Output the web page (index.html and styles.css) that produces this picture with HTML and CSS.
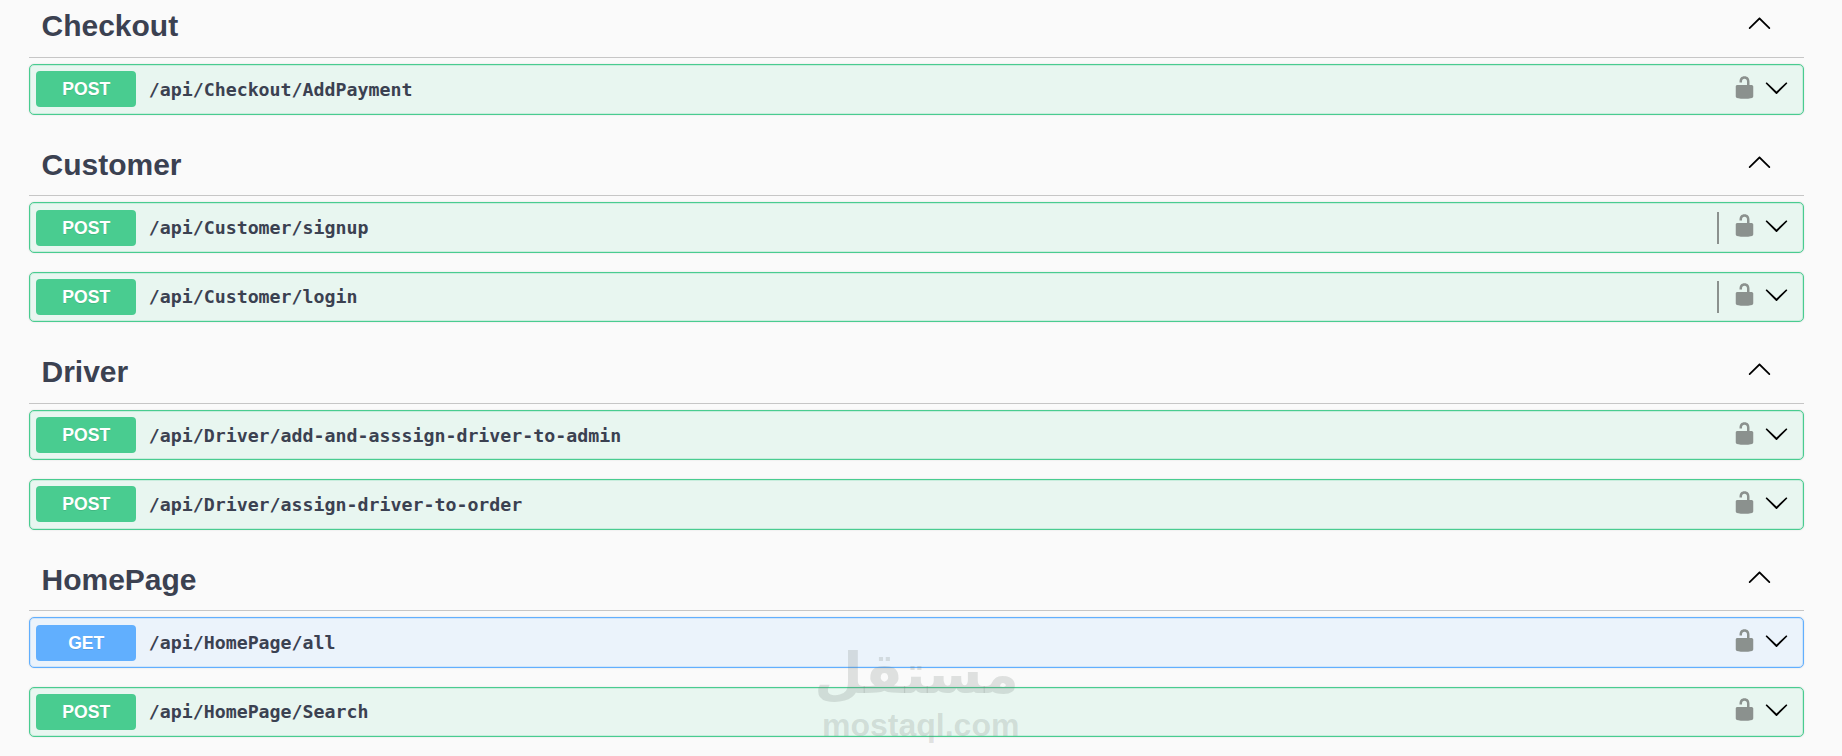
FILE: index.html
```html
<!DOCTYPE html>
<html lang="en">

<head>
    <meta charset="UTF-8">
    <meta name="viewport" content="width=device-width, initial-scale=1.0">
    <title>Swagger UI</title>
    <link rel="stylesheet" href="styles.css">
</head>

<body>
    <svg class="defs" aria-hidden="true">
        <symbol id="unlocked" viewBox="0 0 20 20">
            <path d="M15.8 8H14V5.6C14 2.703 12.665 1 10 1 7.334 1 6 2.703 6 5.6V6h2v-.801C8 3.754 8.797 3 10 3c1.203 0 2 .754 2 2.199V8H4c-.553 0-1 .646-1 1.199V17c0 .549.428 1.139.951 1.307l1.197.387C5.672 18.861 6.55 19 7.1 19h5.8c.549 0 1.428-.139 1.951-.307l1.196-.387c.524-.167.953-.757.953-1.306V9.199C17 8.646 16.352 8 15.8 8z"></path>
        </symbol>
        <symbol id="arrow-up" viewBox="0 0 20 20">
            <path d="M17.418 14.908c.272.268.709.268.979 0s.271-.701 0-.969l-7.908-7.83c-.27-.268-.707-.268-.979 0l-7.908 7.83c-.27.268-.27.701 0 .969.271.268.709.268.979 0L10 7.767l7.418 7.141z"></path>
        </symbol>
        <symbol id="arrow-down" viewBox="0 0 20 20">
            <path d="M17.418 6.109c.272-.268.709-.268.979 0s.271.701 0 .969l-7.908 7.83c-.27.268-.707.268-.979 0l-7.908-7.83c-.27-.268-.27-.701 0-.969.271-.268.709-.268.979 0L10 13.25l7.418-7.141z"></path>
        </symbol>
    </svg>

    <div class="tags">
        <section class="tag">
            <h3 class="tag-title"><span>Checkout</span><svg class="icon"><use href="#arrow-up"></use></svg></h3>
            <div class="op post">
                <span class="method">POST</span>
                <span class="path">/api/Checkout/AddPayment</span>
                <div class="op-right">
                    <svg class="icon lock"><use href="#unlocked"></use></svg>
                    <svg class="icon"><use href="#arrow-down"></use></svg>
                </div>
            </div>
        </section>

        <section class="tag">
            <h3 class="tag-title"><span>Customer</span><svg class="icon"><use href="#arrow-up"></use></svg></h3>
            <div class="op post">
                <span class="method">POST</span>
                <span class="path">/api/Customer/signup</span>
                <div class="op-right">
                    <i class="divider"></i>
                    <svg class="icon lock"><use href="#unlocked"></use></svg>
                    <svg class="icon"><use href="#arrow-down"></use></svg>
                </div>
            </div>
            <div class="op post">
                <span class="method">POST</span>
                <span class="path">/api/Customer/login</span>
                <div class="op-right">
                    <i class="divider"></i>
                    <svg class="icon lock"><use href="#unlocked"></use></svg>
                    <svg class="icon"><use href="#arrow-down"></use></svg>
                </div>
            </div>
        </section>

        <section class="tag">
            <h3 class="tag-title"><span>Driver</span><svg class="icon"><use href="#arrow-up"></use></svg></h3>
            <div class="op post">
                <span class="method">POST</span>
                <span class="path">/api/Driver/add-and-asssign-driver-to-admin</span>
                <div class="op-right">
                    <svg class="icon lock"><use href="#unlocked"></use></svg>
                    <svg class="icon"><use href="#arrow-down"></use></svg>
                </div>
            </div>
            <div class="op post">
                <span class="method">POST</span>
                <span class="path">/api/Driver/assign-driver-to-order</span>
                <div class="op-right">
                    <svg class="icon lock"><use href="#unlocked"></use></svg>
                    <svg class="icon"><use href="#arrow-down"></use></svg>
                </div>
            </div>
        </section>

        <section class="tag">
            <h3 class="tag-title"><span>HomePage</span><svg class="icon"><use href="#arrow-up"></use></svg></h3>
            <div class="op get">
                <span class="method">GET</span>
                <span class="path">/api/HomePage/all</span>
                <div class="op-right">
                    <svg class="icon lock"><use href="#unlocked"></use></svg>
                    <svg class="icon"><use href="#arrow-down"></use></svg>
                </div>
            </div>
            <div class="op post">
                <span class="method">POST</span>
                <span class="path">/api/HomePage/Search</span>
                <div class="op-right">
                    <svg class="icon lock"><use href="#unlocked"></use></svg>
                    <svg class="icon"><use href="#arrow-down"></use></svg>
                </div>
            </div>
        </section>
    </div>

    <div class="watermark">
        <div class="wm-ar" lang="ar" dir="rtl">مستقل</div>
        <div class="wm-en">mostaql.com</div>
    </div>
</body>

</html>
```

FILE: styles.css
```css
*,
::before,
::after {
    box-sizing: border-box;
    margin: 0;
    padding: 0;
}

html,
body {
    height: 756px;
    overflow: hidden;
}

body {
    position: relative;
    background: #fafafa;
    color: #3b4151;
    font-family: "Liberation Sans", Arial, sans-serif;
}

.defs {
    display: none;
}

/* page is scrolled a little, first heading sits above the fold */
.tags {
    width: 1775px;
    margin-left: 29px;
    margin-top: -5px;
}

.tag-title {
    display: flex;
    align-items: center;
    justify-content: space-between;
    height: 62.75px;
    margin-bottom: 6.25px;
    padding: 0 32px 0 12.5px;
    border-bottom: 1px solid #c6c6c6;
    font-size: 30px;
    font-weight: 700;
}

.tag-title span {
    margin-top: 1px;
}

.tag-title .icon {
    margin-top: -6px;
}

.icon {
    display: block;
    flex: none;
    width: 25px;
    height: 25px;
    fill: #000;
}

.op {
    display: flex;
    align-items: center;
    height: 50.5px;
    margin-bottom: 18.75px;
    padding: 0 14px 0 6.25px;
    border: 1px solid;
    border-radius: 5px;
    box-shadow: 0 0 2px rgba(0, 0, 0, 0.12);
}

.op.post {
    background: #e8f6f0;
    border-color: #49cc90;
    box-shadow: 0 0 2px rgba(0, 0, 0, 0.12), inset 0 0 0 1px rgba(73, 204, 144, 0.2);
}

.op.get {
    background: #ebf3fb;
    border-color: #61affe;
    box-shadow: 0 0 2px rgba(0, 0, 0, 0.12), inset 0 0 0 1px rgba(97, 175, 254, 0.2);
}

.method {
    flex: none;
    width: 100px;
    height: 36px;
    border-radius: 4px;
    color: #fff;
    font-size: 17.6px;
    font-weight: 700;
    line-height: 36px;
    text-align: center;
    text-shadow: 0 1px 0 rgba(0, 0, 0, 0.1);
}

.post .method {
    background: #49cc90;
}

.get .method {
    background: #61affe;
}

.path {
    padding-left: 12.5px;
    font-family: "DejaVu Sans Mono", "Liberation Mono", monospace;
    font-size: 18.25px;
    font-weight: 700;
}

.op-right {
    display: flex;
    align-items: center;
    gap: 7px;
    margin-left: auto;
    padding-bottom: 4px;
}

.lock {
    fill: #8b918e;
}

.divider {
    display: block;
    width: 2px;
    height: 32px;
    margin: 4px 6px 0 0;
    background: #8b918e;
}

.watermark {
    position: absolute;
    left: 822px;
    top: 641px;
    width: 197px;
    color: rgba(110, 120, 115, 0.2);
    text-align: center;
    font-weight: 700;
    pointer-events: none;
}

.wm-ar {
    height: 66px;
    font-family: "DejaVu Sans", sans-serif;
    font-size: 56px;
    line-height: 66px;
    white-space: nowrap;
}

.wm-en {
    font-size: 32px;
    line-height: 36px;
}
```
